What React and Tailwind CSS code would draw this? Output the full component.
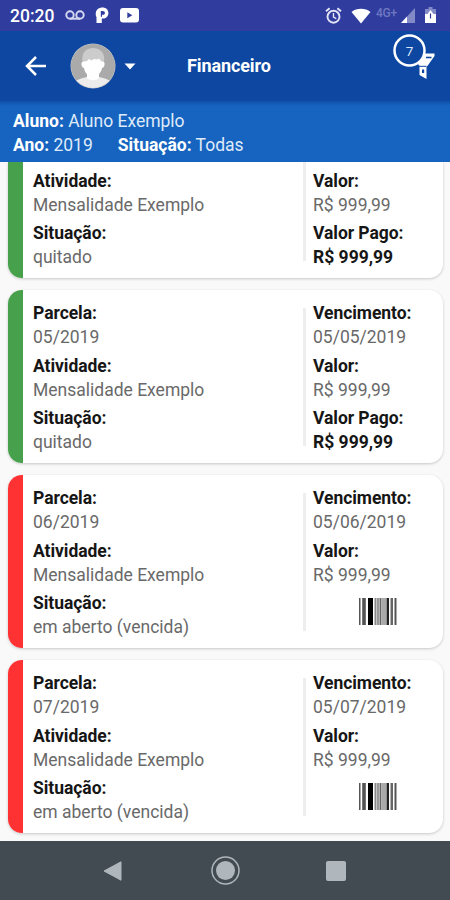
import React from 'react';

const parcelas = [
  { vencimento: '05/04/2019', situacao: 'quitado', paga: true },
  { parcela: '05/2019', vencimento: '05/05/2019', situacao: 'quitado', paga: true },
  { parcela: '06/2019', vencimento: '05/06/2019', situacao: 'em aberto (vencida)', paga: false },
  { parcela: '07/2019', vencimento: '05/07/2019', situacao: 'em aberto (vencida)', paga: false },
];

const StatusBar = () => (
  <div className="flex h-[31px] shrink-0 items-center bg-[#303c9e] pl-[10px] pr-[14px] text-white">
    <span className="w-[45px] whitespace-nowrap text-[17.5px] font-medium leading-5">20:20</span>
    {/* voicemail */}
    <svg className="ml-[10px] h-[12px] w-[20px]" viewBox="0 0 20 12" fill="none" stroke="#d3d7ef" strokeWidth="2">
      <circle cx="5" cy="5" r="3.7" />
      <circle cx="15" cy="5" r="3.7" />
      <path d="M5 8.7h10" />
    </svg>
    {/* parking app */}
    <svg className="ml-[10px] h-[17px] w-[15px]" viewBox="0 0 15 17">
      <path
        fill="#fff"
        fillRule="evenodd"
        d="M7.5 .5C11 .5 13.4 2.6 13.4 6c0 3.3-2.4 5.6-5.400 5.600H6.800V16H1.500V10C.8 9 .6 7.500.8 6 1 2.600 4 .5 7.500.5zM5.800 4v5.800h1.200V7.800h.7c1.300 0 2.200-.7 2.200-1.900S9 4 7.700 4z"
      />
    </svg>
    <svg className="ml-[10px] h-[15px] w-[19px]" viewBox="0 0 19 15">
      <rect width="19" height="14.5" rx="3" fill="#fff" />
      <path d="M7.3 4.3v6l5-3z" fill="#303c9e" />
    </svg>
    <div className="ml-auto flex items-center">
      <svg className="h-[18px] w-[17px]" viewBox="0 0 17 18" fill="none" stroke="#e4e6f5" strokeWidth="1.9">
        <circle cx="8.5" cy="9.7" r="6" />
        <path d="M1 4.3l3.6-3M16 4.3l-3.6-3" />
        <path d="M8.5 6v4l2.8 1.7" strokeWidth="1.4" />
      </svg>
      <svg className="ml-[9px] h-[16px] w-[20px]" viewBox="0 0 20 16">
        <path d="M.5 4C5.5-.2 14.5-.2 19.5 4L10 15.5z" fill="#fff" />
      </svg>
      <span className="mb-[6px] ml-[5px] w-[21px] whitespace-nowrap text-[12px] font-medium leading-4 tracking-[-0.3px] text-[#6f78c1]">4G+</span>
      <svg className="ml-[4px] h-[15px] w-[14px]" viewBox="0 0 14 15">
        <path d="M14 0v15H0z" fill="#8289c7" />
        <path d="M6 8.6V15H0z" fill="#fff" />
      </svg>
      <svg className="ml-[10px] h-[17px] w-[11px]" viewBox="0 0 11 17">
        <path d="M3.5 0h4v2H11v6H0V2h3.500z" fill="#8289c7" />
        <path d="M0 7h2.500l3-4 3 4H11v9H0z" fill="#fff" />
        <path d="M5.500 6.500v5" stroke="#303c9e" strokeWidth="1.200" />
      </svg>
    </div>
  </div>
);

const Avatar = () => (
  <svg className="ml-[23px] h-[46px] w-[46px]" viewBox="0 0 46 46">
    <defs>
      <clipPath id="avatar">
        <circle cx="23" cy="23" r="22" />
      </clipPath>
    </defs>
    <circle cx="23" cy="23" r="22.5" fill="#c9c9c9" />
    <g clipPath="url(#avatar)">
      <rect width="46" height="46" fill="#aaa" />
      <path d="M2 46c0-8 6-10 15-12h12c9 2 15 4 15 12z" fill="#ececec" />
      <path d="M12.5 19C11 10 16 5 23 5s12.500 5 11 14l-2 2H14z" fill="#ccc" />
      <path
        d="M14 18.500l3-.5 2-2 2 1.500 3-1.500 3 .5 2-1 2 2.500 1 .5c2 0 3 1 2.500 3.500-.3 2-1.500 3-2.500 3-.5 3-2 5-3 6v4c-3 3-9 3-12 0v-4c-1.500-1-2.500-3-3-6-1 0-2-1-2.500-3-.3-2.500.5-3.500 2.500-3.500z"
        fill="#fff"
      />
    </g>
  </svg>
);

const Header = () => (
  <div className="flex h-[70px] shrink-0 items-center bg-[#0d47a1] text-white">
    <svg className="ml-[25px] h-[20px] w-[22px]" viewBox="0 0 22 20" fill="none" stroke="#fff" strokeWidth="2.5">
      <path d="M21 10H2M11 1L2 10l9 9" />
    </svg>
    <Avatar />
    <svg className="ml-[8px] h-[7px] w-[12px]" viewBox="0 0 12 7">
      <path d="M.5.5h11L6 6.500z" fill="#fff" />
    </svg>
    <h1 className="ml-[51px] text-[18px] font-bold leading-6 tracking-[-0.1px]">Financeiro</h1>
    {/* filter with the number of active filters over it */}
    <div className="relative mb-[18px] ml-auto mr-[14px] h-[46px] w-[44px]">
      <svg className="h-full w-full" viewBox="0 0 44 46">
        <path d="M28 19.500h14.500v2.500L36.500 30.500 34.500 33v12l-7-4V32L26 30z" fill="#fff" />
        <path d="M34 23.500h5.500" stroke="#0d47a1" strokeWidth="1.600" />
        <path d="M27 32.300h7.500" stroke="#0d47a1" strokeWidth="1" />
        <path d="M30 35.500h2.200v3.500H30z" fill="#0d47a1" />
        <circle cx="17.500" cy="16.500" r="15" fill="#0d47a1" stroke="#fff" strokeWidth="2.500" />
      </svg>
      <span className="absolute left-[2px] top-[7px] w-[31px] text-center text-[13.5px] leading-5 text-[#dbe6f7]">7</span>
    </div>
  </div>
);

const Resumo = () => (
  <div className="h-[61px] shrink-0 bg-linear-to-b from-[#0f50a9] to-[#1764c0] to-[5px] pl-[13px] pt-[8px] text-[17.5px] leading-6 text-[#dfebf9]">
    <p>
      <b className="text-white">Aluno:</b> Aluno Exemplo
    </p>
    <p className="flex gap-[25px]">
      <span>
        <b className="text-white">Ano:</b> 2019
      </span>
      <span>
        <b className="text-white">Situação:</b> Todas
      </span>
    </p>
  </div>
);

const Campo = ({ label, valor, destaque }) => (
  <div className="text-[17.5px] leading-6">
    <div className="font-bold tracking-[-0.05px] text-[#161616]">{label}:</div>
    <div className={destaque ? 'font-bold text-[#161616]' : 'text-[#696969]'}>{valor}</div>
  </div>
);

// [x, width, color]
const barras = [
  [0, 1.5, '#555'], [3, 4, '#777'], [4.5, 1, '#333'], [9, 5, '#000'], [15.5, 2, '#888'],
  [18.5, 1, '#333'], [20.5, 2, '#666'], [23, 4, '#aaa'], [27.5, 2.5, '#222'], [31.5, 2.5, '#666'],
  [35.5, 2, '#555'],
];

const CodigoDeBarras = () => (
  <svg className="ml-[46px] mt-[6.5px] h-[27px] w-[38px]" viewBox="0 0 38 27">
    {barras.map(([x, w, cor]) => (
      <rect key={x} x={x} width={w} height="27" fill={cor} />
    ))}
  </svg>
);

const Card = ({ item }) => (
  <div
    className={
      'flex shrink-0 overflow-hidden bg-white shadow-[0_1px_3px_rgba(0,0,0,0.2)] ' +
      (item.parcela ? 'h-[173px] rounded-[14px] pt-[11px]' : 'h-[116px] rounded-b-[14px] pt-[6.5px]')
    }
  >
    <div className={(item.paga ? 'bg-[#47a04b]' : 'bg-[#fe3133]') + ' -mt-[11px] w-[15px]'} />
    <div className="flex w-[280px] flex-col gap-[4.5px] pl-[10px]">
      {item.parcela && <Campo label="Parcela" valor={item.parcela} />}
      <Campo label="Atividade" valor="Mensalidade Exemplo" />
      <Campo label="Situação" valor={item.situacao} />
    </div>
    <div className={(item.parcela ? 'mt-[7px]' : '-mt-[7px]') + ' mb-[17px] w-[3px] bg-[#eee]'} />
    <div className="flex flex-col gap-[4.5px] pl-[7px]">
      {item.parcela && <Campo label="Vencimento" valor={item.vencimento} />}
      <Campo label="Valor" valor="R$ 999,99" />
      {item.paga ? <Campo label="Valor Pago" valor="R$ 999,99" destaque /> : <CodigoDeBarras />}
    </div>
  </div>
);

const NavBar = () => (
  <div className="flex h-[59px] shrink-0 items-center bg-[#434b52] pl-[103px]">
    <svg className="h-[20px] w-[19px]" viewBox="0 0 19 20">
      <path d="M18 .8v18.400L1 10z" fill="#afb7bc" stroke="#afb7bc" strokeLinejoin="round" />
    </svg>
    <svg className="ml-[89px] h-[29px] w-[29px]" viewBox="0 0 29 29">
      <circle cx="14.5" cy="14.5" r="13.5" fill="none" stroke="#afb7bc" strokeWidth="1.5" />
      <circle cx="14.5" cy="14.5" r="9.5" fill="#afb7bc" />
    </svg>
    <div className="ml-[86px] h-[20px] w-[20px] rounded-[2px] bg-[#afb7bc]" />
  </div>
);

export default function App() {
  return (
    <div className="flex h-[900px] w-[450px] flex-col overflow-hidden bg-[#f9f9f9] font-['Roboto',sans-serif]">
      <StatusBar />
      <Header />
      <Resumo />
      <div className="flex min-h-0 flex-1 flex-col justify-end gap-3 overflow-hidden pb-[8px] pl-[8px] pr-[7px]">
        {parcelas.map((item) => (
          <Card key={item.vencimento} item={item} />
        ))}
      </div>
      <NavBar />
    </div>
  );
}
